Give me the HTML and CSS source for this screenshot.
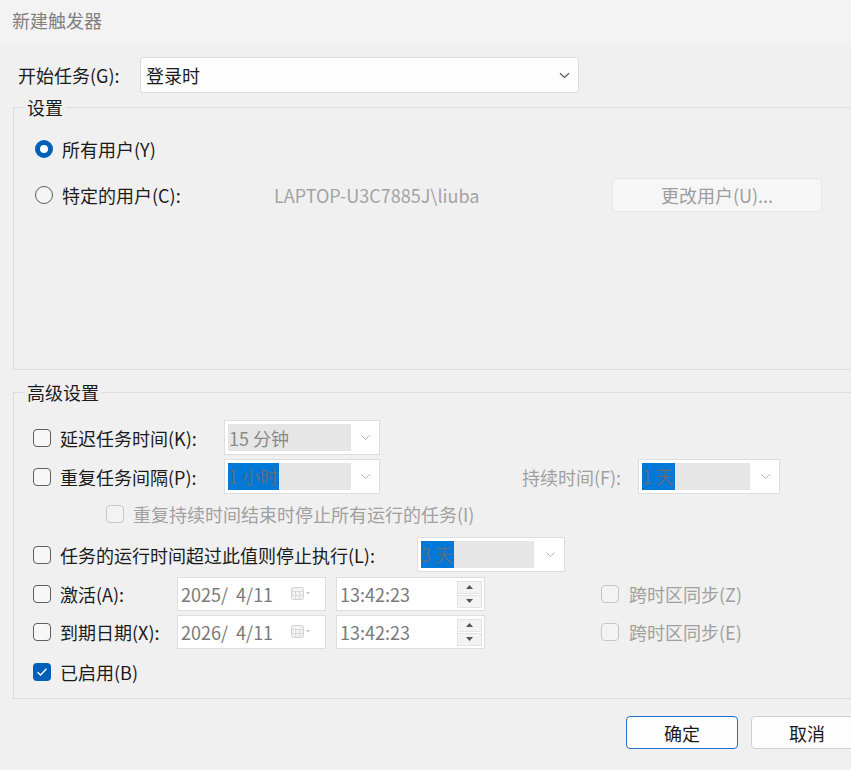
FILE: index.html
```html
<!DOCTYPE html>
<html lang="zh-CN">
<head>
<meta charset="utf-8">
<title>新建触发器</title>
<link rel="stylesheet" href="styles.css">
</head>
<body>
<div class="window">
  <div class="titlebar">新建触发器</div>
  <div class="content">
    <div class="start-row">
      <span class="start-label">开始任务(G):</span>
      <div class="main-combo">
        <span>登录时</span>
        <svg class="chev-dark" width="11" height="7" viewBox="0 0 11 7"><path d="M1 1.2 L5.5 5.5 L10 1.2" fill="none" stroke="#5a5a5a" stroke-width="1.2"/></svg>
      </div>
    </div>

    <fieldset class="group settings">
      <legend>设置</legend>
      <div class="radio-row first">
        <span class="radio checked"></span>
        <span class="lbl">所有用户(Y)</span>
      </div>
      <div class="radio-row">
        <span class="radio"></span>
        <span class="lbl user-lbl">特定的用户(C):</span>
        <span class="user-name">LAPTOP-U3C7885J\liuba</span>
        <span class="btn-change">更改用户(U)...</span>
      </div>
    </fieldset>

    <fieldset class="group advanced">
      <legend>高级设置</legend>
      <div class="row r-delay">
        <span class="cb"></span>
        <span class="lbl w164">延迟任务时间(K):</span>
        <div class="combo w156">
          <div class="field f123"><span class="txt">15 分钟</span></div>
          <svg class="chev" width="9" height="5" viewBox="0 0 9 5"><path d="M0.5 0.5 L4.5 4.5 L8.5 0.5" fill="none" stroke="#b4b4b4" stroke-width="1"/></svg>
        </div>
      </div>
      <div class="row r-repeat">
        <span class="cb"></span>
        <span class="lbl w164">重复任务间隔(P):</span>
        <div class="combo w156">
          <div class="field f123"><span class="sel">1 小时</span></div>
          <svg class="chev" width="9" height="5" viewBox="0 0 9 5"><path d="M0.5 0.5 L4.5 4.5 L8.5 0.5" fill="none" stroke="#b4b4b4" stroke-width="1"/></svg>
        </div>
        <span class="lbl dim dur-lbl">持续时间(F):</span>
        <div class="combo w142">
          <div class="field f108"><span class="sel">1 天</span></div>
          <svg class="chev" width="9" height="5" viewBox="0 0 9 5"><path d="M0.5 0.5 L4.5 4.5 L8.5 0.5" fill="none" stroke="#b4b4b4" stroke-width="1"/></svg>
        </div>
      </div>
      <div class="row r-sub">
        <span class="cb disabled"></span>
        <span class="lbl dim">重复持续时间结束时停止所有运行的任务(I)</span>
      </div>
      <div class="row r-stop">
        <span class="cb"></span>
        <span class="lbl w357">任务的运行时间超过此值则停止执行(L):</span>
        <div class="combo w148">
          <div class="field f113"><span class="sel">3 天</span></div>
          <svg class="chev" width="9" height="5" viewBox="0 0 9 5"><path d="M0.5 0.5 L4.5 4.5 L8.5 0.5" fill="none" stroke="#b4b4b4" stroke-width="1"/></svg>
        </div>
      </div>
      <div class="row r-date">
        <span class="cb"></span>
        <span class="lbl w117">激活(A):</span>
        <div class="datebox">
          <span class="txt">2025/&nbsp;&nbsp;4/11</span>
          <svg class="cal" width="20" height="14" viewBox="0 0 20 14"><rect x="0.5" y="0.5" width="12" height="12" rx="2" fill="#f2f2f2" stroke="#cfcfcf"/><path d="M0.5 4.5H12.5M4.5 4.5V12.5M8.5 4.5V12.5M0.5 8.5H12.5" stroke="#dcdcdc" stroke-width="1"/><path d="M15 5 L19 5 L17 7.5 Z" fill="#c4c4c4"/></svg>
        </div>
        <div class="timebox">
          <span class="txt">13:42:23</span>
          <div class="spin">
            <span class="sp"><svg width="7" height="4" viewBox="0 0 7 4"><path d="M0 4 L3.5 0 L7 4 Z" fill="#555"/></svg></span>
            <span class="sp"><svg width="7" height="4" viewBox="0 0 7 4"><path d="M0 0 L3.5 4 L7 0 Z" fill="#555"/></svg></span>
          </div>
        </div>
        <span class="cb disabled sync"></span>
        <span class="lbl dim">跨时区同步(Z)</span>
      </div>
      <div class="row r-date2">
        <span class="cb"></span>
        <span class="lbl w117">到期日期(X):</span>
        <div class="datebox">
          <span class="txt">2026/&nbsp;&nbsp;4/11</span>
          <svg class="cal" width="20" height="14" viewBox="0 0 20 14"><rect x="0.5" y="0.5" width="12" height="12" rx="2" fill="#f2f2f2" stroke="#cfcfcf"/><path d="M0.5 4.5H12.5M4.5 4.5V12.5M8.5 4.5V12.5M0.5 8.5H12.5" stroke="#dcdcdc" stroke-width="1"/><path d="M15 5 L19 5 L17 7.5 Z" fill="#c4c4c4"/></svg>
        </div>
        <div class="timebox">
          <span class="txt">13:42:23</span>
          <div class="spin">
            <span class="sp"><svg width="7" height="4" viewBox="0 0 7 4"><path d="M0 4 L3.5 0 L7 4 Z" fill="#555"/></svg></span>
            <span class="sp"><svg width="7" height="4" viewBox="0 0 7 4"><path d="M0 0 L3.5 4 L7 0 Z" fill="#555"/></svg></span>
          </div>
        </div>
        <span class="cb disabled sync"></span>
        <span class="lbl dim">跨时区同步(E)</span>
      </div>
      <div class="row r-enabled">
        <span class="cb checked"><svg width="12" height="10" viewBox="0 0 12 10"><path d="M1.5 5.2 L4.6 8 L10.5 1.8" fill="none" stroke="#fff" stroke-width="1.3"/></svg></span>
        <span class="lbl">已启用(B)</span>
      </div>
    </fieldset>

    <div class="buttons">
      <span class="btn primary">确定</span>
      <span class="btn">取消</span>
    </div>
  </div>
</div>
</body>
</html>
```

FILE: styles.css
```css
html, body {
  margin: 0;
  padding: 0;
  width: 851px;
  height: 770px;
  overflow: hidden;
  background: #f0f0f0;
}

body {
  font-family: "Microsoft YaHei", "Noto Sans CJK SC", "Noto Sans", sans-serif;
  font-size: 18px;
  color: #1b1b1b;
}

.window {
  width: 851px;
  height: 770px;
  overflow: hidden;
}

.titlebar {
  height: 43px;
  background: #f3f3f3;
  color: #808080;
  padding-left: 12px;
  line-height: 40px;
  font-size: 18px;
}

.content {
  padding-left: 13px;
}

.start-row {
  display: flex;
  align-items: center;
  margin-top: 14px;
  height: 36px;
}

.start-label {
  width: 127px;
  padding-left: 5px;
  box-sizing: border-box;
  white-space: nowrap;
}

.main-combo {
  width: 439px;
  height: 36px;
  box-sizing: border-box;
  background: #fdfdfd;
  border: 1px solid #dcdcdc;
  border-radius: 3px;
  display: flex;
  align-items: center;
  justify-content: space-between;
  padding: 0 8px 0 5px;
}

.group {
  margin: 0;
  padding: 0;
  border: 1px solid #dcdcdc;
  border-right: none;
  width: 860px;
  box-sizing: border-box;
}

.group legend {
  margin-left: 10px;
  padding: 0 3px;
  line-height: 20px;
  font-size: 18px;
}

.settings {
  margin-top: 4px;
  height: 273px;
  padding-top: 14px;
}

.advanced {
  margin-top: 12px;
  height: 317px;
  padding-top: 18px;
}

.radio-row {
  display: flex;
  align-items: center;
  height: 36px;
  padding-left: 21px;
}

.radio-row + .radio-row {
  margin-top: 10px;
}

.radio {
  width: 18px;
  height: 18px;
  box-sizing: border-box;
  border-radius: 50%;
  border: 1px solid #5c5c5c;
  background: #f5f5f5;
  margin-right: 9px;
  flex: none;
}

.radio.checked {
  border: 5px solid #005fb8;
  background: #ffffff;
}

.user-lbl {
  width: 212px;
}

.user-name {
  color: #a3a3a3;
  width: 338px;
}

.btn-change {
  width: 210px;
  height: 34px;
  box-sizing: border-box;
  border: 1px solid #e5e5e5;
  border-radius: 4px;
  background: #f6f6f6;
  color: #9d9d9d;
  display: flex;
  align-items: center;
  justify-content: center;
}

.row {
  display: flex;
  align-items: center;
  padding-left: 19px;
}

.cb {
  width: 18px;
  height: 18px;
  box-sizing: border-box;
  border: 1px solid #5e5e5e;
  border-radius: 4px;
  background: #f7f7f7;
  margin-right: 9px;
  flex: none;
  display: flex;
  align-items: center;
  justify-content: center;
}

.cb.disabled {
  border-color: #c6c6c6;
  background: #f3f3f3;
}

.cb.checked {
  border: none;
  background: #005fb8;
}

.lbl {
  white-space: nowrap;
}

.dim {
  color: #a0a0a0;
}

.w164 { width: 164px; }
.w357 { width: 357px; }
.w117 { width: 117px; }

.r-delay { height: 35px; }
.r-repeat { height: 35px; margin-top: 4px; }
.r-sub { height: 30px; margin-top: 5px; padding-left: 92px; }
.r-stop { height: 35px; margin-top: 8px; }
.r-date { height: 34px; margin-top: 5px; }
.r-date2 { height: 34px; margin-top: 4px; }
.r-enabled { height: 26px; margin-top: 10px; }

.dur-lbl {
  margin-left: 142px;
  width: 116px;
}

.combo {
  height: 35px;
  box-sizing: border-box;
  background: #ffffff;
  border: 1px solid #dedede;
  display: flex;
  align-items: center;
  padding-left: 3px;
}

.w156 { width: 156px; }
.w142 { width: 142px; }
.w148 { width: 148px; }

.field {
  height: 27px;
  background: #e6e6e6;
  display: flex;
  align-items: center;
  color: #8a8a8a;
  white-space: nowrap;
}

.f123 { width: 123px; }
.f108 { width: 108px; }
.f113 { width: 113px; }

.field .txt {
  padding-left: 1px;
}

.sel {
  background: #0078d7;
  color: #5f6d7d;
  height: 27px;
  line-height: 27px;
  padding-right: 1px;
}

.chev {
  margin-left: auto;
  margin-right: 9px;
}

.datebox, .timebox {
  width: 149px;
  height: 34px;
  box-sizing: border-box;
  background: #ffffff;
  border: 1px solid #dedede;
  display: flex;
  align-items: center;
  padding-left: 3px;
  color: #7a7a7a;
  white-space: nowrap;
}

.datebox .cal {
  margin-left: auto;
  margin-right: 14px;
}

.timebox {
  margin-left: 10px;
  padding-right: 2px;
}

.spin {
  margin-left: auto;
  display: flex;
  flex-direction: column;
  gap: 1px;
}

.sp {
  width: 25px;
  height: 13px;
  box-sizing: border-box;
  background: #f3f3f3;
  border: 1px solid #e3e3e3;
  display: flex;
  align-items: center;
  justify-content: center;
}

.sync {
  margin-left: 116px;
  margin-right: 10px;
}

.buttons {
  display: flex;
  gap: 13px;
  margin-top: 17px;
  padding-left: 613px;
}

.btn {
  width: 112px;
  height: 33px;
  box-sizing: border-box;
  border: 1px solid #d0d0d0;
  border-radius: 4px;
  background: #fdfdfd;
  display: flex;
  align-items: center;
  justify-content: center;
  flex: none;
}

.btn.primary {
  border: 1.5px solid #1a73d1;
}
```
